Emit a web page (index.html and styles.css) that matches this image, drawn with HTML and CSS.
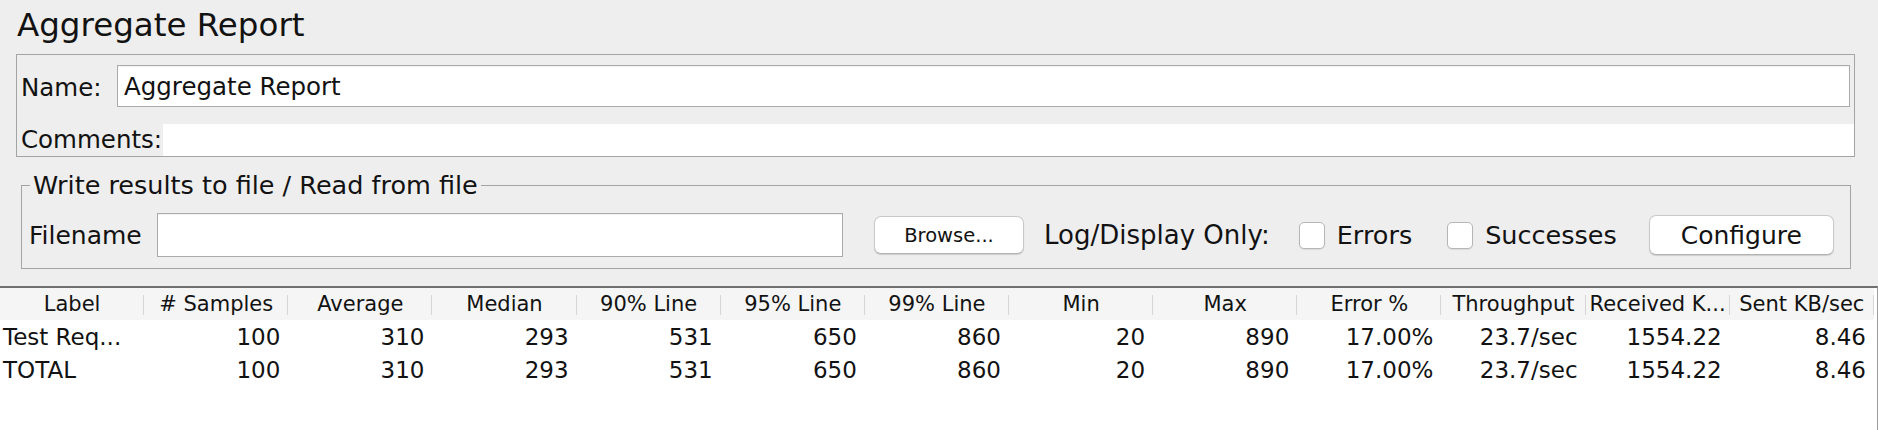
FILE: index.html
```html
<!DOCTYPE html>
<html lang="en">
<head>
<meta charset="utf-8">
<title>Aggregate Report</title>
<link rel="stylesheet" href="styles.css">
</head>
<body>
  <div class="title">Aggregate Report</div>

  <div class="name-panel">
    <div class="name-row">
      <span class="lbl name-lbl">Name:</span>
      <div class="text-field name-field">Aggregate Report</div>
    </div>
    <div class="comments-row">
      <span class="lbl comments-lbl">Comments:</span>
      <div class="comments-area"></div>
    </div>
  </div>

  <fieldset class="file-panel">
    <legend>Write results to file / Read from file</legend>
    <div class="file-row">
      <span class="lbl file-lbl">Filename</span>
      <div class="text-field file-field"></div>
      <button class="btn browse">Browse...</button>
      <span class="lbl log-lbl">Log/Display Only:</span>
      <span class="check check-errors"></span>
      <span class="lbl check-lbl errors-lbl">Errors</span>
      <span class="check check-success"></span>
      <span class="lbl check-lbl success-lbl">Successes</span>
      <button class="btn configure">Configure</button>
    </div>
  </fieldset>

  <div class="results">
    <table class="grid">
      <thead>
        <tr>
          <th>Label</th>
          <th># Samples</th>
          <th>Average</th>
          <th>Median</th>
          <th>90% Line</th>
          <th>95% Line</th>
          <th>99% Line</th>
          <th>Min</th>
          <th>Max</th>
          <th>Error %</th>
          <th>Throughput</th>
          <th>Received K...</th>
          <th>Sent KB/sec</th>
        </tr>
      </thead>
      <tbody>
        <tr>
          <td>Test Req...</td>
          <td>100</td>
          <td>310</td>
          <td>293</td>
          <td>531</td>
          <td>650</td>
          <td>860</td>
          <td>20</td>
          <td>890</td>
          <td>17.00%</td>
          <td>23.7/sec</td>
          <td>1554.22</td>
          <td>8.46</td>
        </tr>
        <tr>
          <td>TOTAL</td>
          <td>100</td>
          <td>310</td>
          <td>293</td>
          <td>531</td>
          <td>650</td>
          <td>860</td>
          <td>20</td>
          <td>890</td>
          <td>17.00%</td>
          <td>23.7/sec</td>
          <td>1554.22</td>
          <td>8.46</td>
        </tr>
      </tbody>
    </table>
  </div>
</body>
</html>
```

FILE: styles.css
```css
html, body {
  margin: 0;
  padding: 0;
}

body {
  height: 430px;
  overflow: hidden;
  display: flex;
  flex-direction: column;
  background: #eeeeee;
  color: #121212;
  font-family: "DejaVu Sans", "Liberation Sans", sans-serif;
}

.title {
  font-size: 32.5px;
  line-height: 38px;
  padding: 6px 0 0 17px;
  flex: none;
}

/* ---------- Name / Comments panel ---------- */
.name-panel {
  flex: none;
  margin: 10px 0 0 16px;
  width: 1839px;
  height: 103px;
  box-sizing: border-box;
  border: 1px solid #a4a4a4;
}

.name-row {
  display: flex;
  align-items: center;
  padding: 10px 4px 0 4px;
}

.lbl {
  font-size: 24.5px;
  white-space: nowrap;
}

.name-lbl {
  width: 96px;
  flex: none;
  padding-top: 2px;
}

.text-field {
  background: #ffffff;
  border: 1px solid #ababab;
  box-sizing: border-box;
  box-shadow: inset 0 1px 1px rgba(0, 0, 0, 0.06);
}

.name-field {
  flex: 1;
  height: 42px;
  padding-left: 6px;
  font-size: 24.5px;
  line-height: 42px;
}

.comments-row {
  display: flex;
  margin-top: 17px;
  padding-left: 4px;
  height: 32px;
}

.comments-lbl {
  width: 142px;
  flex: none;
  line-height: 32px;
}

.comments-area {
  flex: 1;
  background: #ffffff;
}

/* ---------- File panel ---------- */
.file-panel {
  flex: none;
  margin: 13px 0 0 21px;
  width: 1830px;
  box-sizing: border-box;
  padding: 13px 17px 11px 7px;
  border: 1px solid #a4a4a4;
  min-width: 0;
}

.file-panel legend {
  font-size: 25.5px;
  line-height: 30px;
  padding: 0 3px;
  margin-left: 1px;
}

.file-row {
  display: flex;
  align-items: center;
  height: 44px;
}

.file-lbl {
  width: 128px;
  flex: none;
  font-size: 25px;
}

.file-field {
  width: 686px;
  height: 44px;
  flex: none;
}

.btn {
  flex: none;
  background: #ffffff;
  border: 1px solid #c9c9c9;
  border-bottom-color: #b3b3b3;
  border-radius: 7px;
  box-shadow: 0 1px 1px rgba(0, 0, 0, 0.14);
  font-family: inherit;
  color: #121212;
  padding: 0;
  box-sizing: border-box;
}

.browse {
  margin-left: 31px;
  width: 150px;
  height: 38px;
  font-size: 19.5px;
}

.log-lbl {
  margin-left: 20px;
  font-size: 26px;
}

.check {
  flex: none;
  width: 26px;
  height: 27px;
  box-sizing: border-box;
  background: #ffffff;
  border: 1px solid #b6b6b6;
  border-radius: 5px;
  box-shadow: 0 1px 1px rgba(0, 0, 0, 0.08);
}

.check-errors {
  margin-left: 29px;
}

.check-success {
  margin-left: 35px;
}

.check-lbl {
  font-size: 25.5px;
  margin-left: 12px;
}

.configure {
  margin-left: 32px;
  width: 185px;
  height: 40px;
  font-size: 25px;
}

/* ---------- Results table ---------- */
.results {
  flex: 1;
  margin-top: 17px;
  border-top: 2px solid #707070;
  border-right: 1px solid #9c9c9c;
  padding-right: 3px;
  background: #ffffff;
}

.grid {
  width: 100%;
  table-layout: fixed;
  border-collapse: collapse;
  border-spacing: 0;
}

.grid th {
  height: 32px;
  padding: 0;
  font-size: 21px;
  font-weight: normal;
  text-align: center;
  white-space: nowrap;
  overflow: hidden;
  background: linear-gradient(#d6d6d6, #d6d6d6) no-repeat right 0 top 7px / 1px 20px, #f5f5f5;
}

.grid td {
  height: 33px;
  padding: 0 8px 0 0;
  font-size: 23px;
  text-align: right;
  white-space: nowrap;
  overflow: hidden;
}

.grid td:first-child {
  text-align: left;
  padding: 0 0 0 3px;
}
```
